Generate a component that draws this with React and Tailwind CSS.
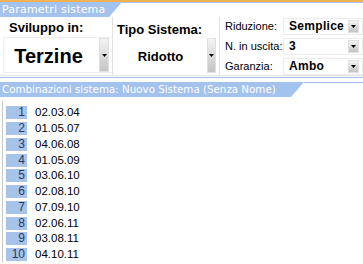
import React from "react";

const Btn = ({ className = "" }) => (
  <div className={"flex items-center justify-center bg-gradient-to-b from-[#f4f4f4] to-[#c4c4c4] border border-[#e0e0e0] " + className}>
    <svg width="5" height="3" viewBox="0 0 5 3"><path d="M0 0h5L2.5 3z" fill="#000" /></svg>
  </div>
);

const Tab = ({ children, w }) => (
  <div className="flex items-start h-[15px]">
    <div className={"h-[15px] shrink-0 whitespace-nowrap overflow-hidden bg-[#a4c2ee] text-white leading-[15px] pl-[2px] [clip-path:polygon(0_0,100%_0,calc(100%-13px)_100%,0_100%)] " + w} style={{ fontFamily: '"DejaVu Sans", sans-serif' }}>
      {children}
    </div>
    <div className="flex-1 h-px bg-[#a4c2ee]" />
  </div>
);

const rows = ["02.03.04","01.05.07","04.06.08","01.05.09","03.06.10","02.08.10","07.09.10","02.06.11","03.08.11","04.10.11"];

export default function App() {
  return (
    <div className="w-[363px] h-[264px] bg-white overflow-hidden" style={{ fontFamily: '"Liberation Sans", Arial, sans-serif' }}>
      <div className="h-[2px] bg-[#f5b250]" />
      <Tab w="w-[122px] text-[11px] tracking-[0.2px]">Parametri sistema</Tab>
      <div className="flex h-[59px] border-b border-[#e4e4e4]">
        <div className="w-[113px] flex flex-col border-r border-[#e2e2e2] pl-[3px]">
          <div className="text-[13px] font-bold text-black leading-[15px] pl-[6px] pt-[3px]">Sviluppo in:</div>
          <div className="flex flex-1 mt-[2px] mb-[2px] border border-[#eeeeee] border-r-0">
            <div className="flex-1 flex items-center justify-center text-[20px] font-bold text-black pr-[6px] pt-[1px]">Terzine</div>
            <Btn className="w-[10px] mr-[3px]" />
          </div>
        </div>
        <div className="w-[107px] flex flex-col border-r border-[#e2e2e2] pl-[3px]">
          <div className="text-[13px] font-bold text-black leading-[15px] pl-[1px] pt-[5px]">Tipo Sistema:</div>
          <div className="flex flex-1 mt-[1px] mb-[2px]">
            <div className="flex-1 flex items-center justify-center text-[13px] font-bold text-black pr-[2px] pt-[2px]">Ridotto</div>
            <Btn className="w-[9px] mr-[3px]" />
          </div>
        </div>
        <div className="flex-1 flex flex-col gap-[3px] pl-[5px] pt-[1px]">
          {[["Riduzione:", "Semplice"], ["N. in uscita:", "3"], ["Garanzia:", "Ambo"]].map(([l, v]) => (
            <div key={l} className="flex items-center h-[17px]">
              <div className="w-[58px] text-[11px] text-black">{l}</div>
              <div className="flex-1 flex h-[17px] border border-[#ececec]">
                <div className="flex-1 text-[12px] font-bold text-black leading-[15px] pl-[5px] tracking-[0.3px]">{v}</div>
                <Btn className="w-[11px] mr-[3px] my-[1px]" />
              </div>
            </div>
          ))}
        </div>
      </div>
      <div className="h-px bg-[#a4c2ee] mt-[1px]" />
      <div className="mt-[4px]">
        <Tab w="w-[304px] text-[10.3px]">Combinazioni sistema: Nuovo Sistema (Senza Nome)</Tab>
      </div>
      <div className="ml-[2px] mt-[4px] border-l border-[#c8c8c8] pl-[3px] pt-[4px] flex flex-col">
        {rows.map((r, i) => (
          <div key={r} className="flex items-center h-[15.75px]">
            <div className="w-[21px] h-[13px] shrink-0 bg-[#a7c3ec] text-right text-[12px] leading-[13px] text-[#283c5a] pr-[2px]">{i + 1}</div>
            <div className="pl-[8px] text-[11.5px] leading-[13px] text-black">{r}</div>
          </div>
        ))}
      </div>
    </div>
  );
}
